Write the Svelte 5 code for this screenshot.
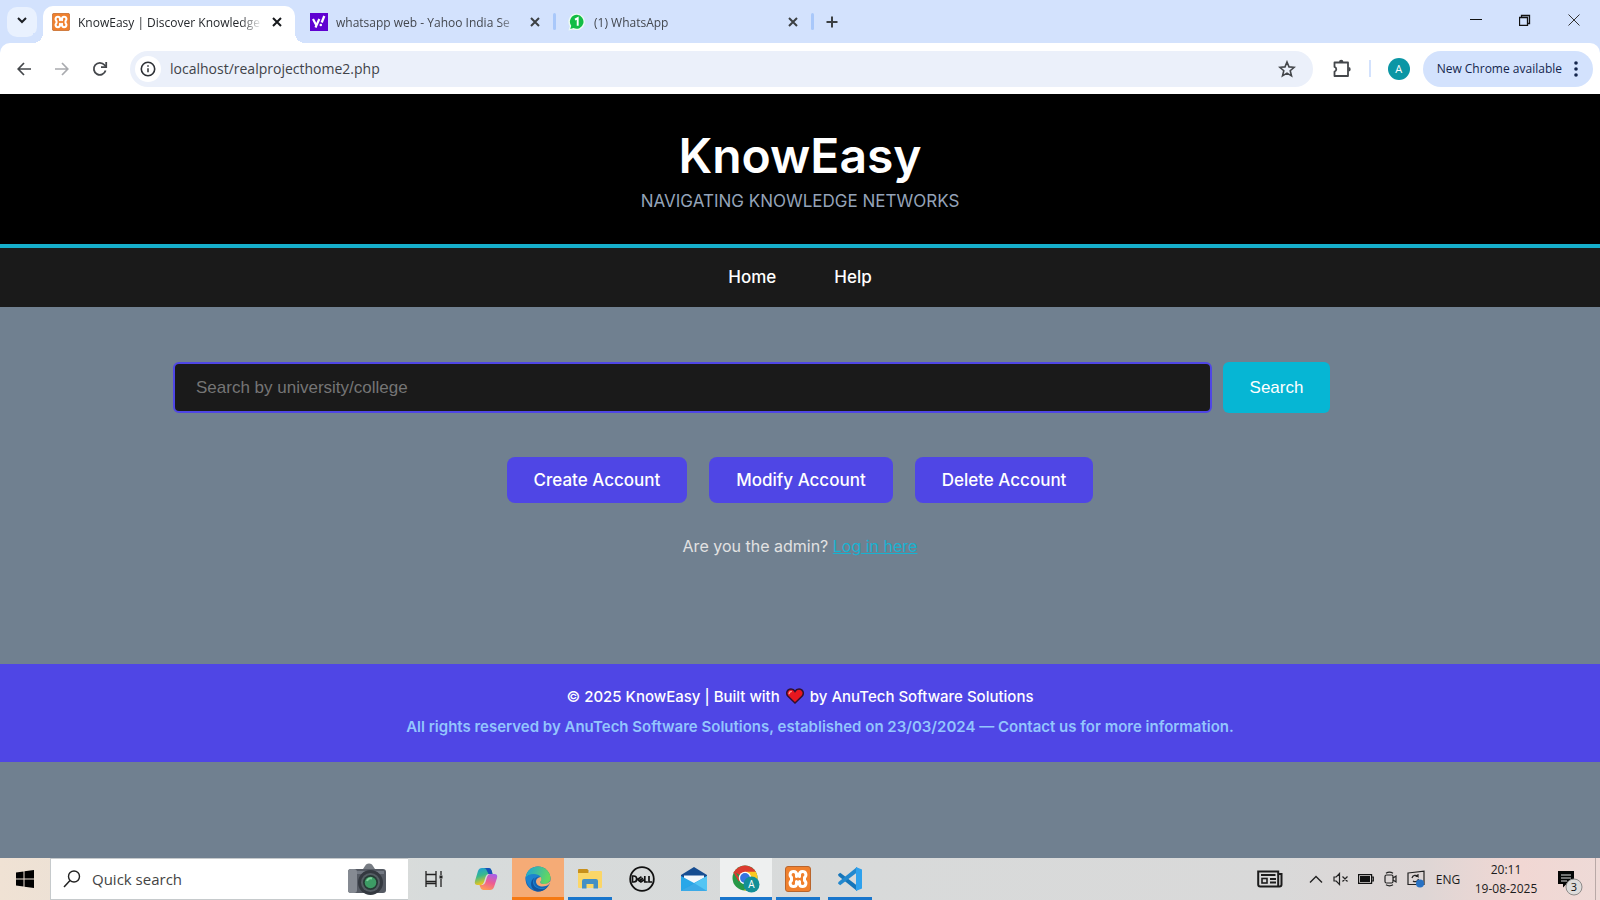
<script>
  const tabs = [
    { id: 'xampp', title: 'KnowEasy | Discover Knowledge', active: true },
    { id: 'yahoo', title: 'whatsapp web - Yahoo India Se', active: false },
    { id: 'whatsapp', title: '(1) WhatsApp', active: false }
  ];
  const apps = [
    { id: 'taskview', label: 'Task View', state: '' },
    { id: 'copilot', label: 'Copilot', state: '' },
    { id: 'edge', label: 'Microsoft Edge', state: 'alert' },
    { id: 'explorer', label: 'File Explorer', state: 'open' },
    { id: 'dell', label: 'Dell', state: '' },
    { id: 'mail', label: 'Mail', state: '' },
    { id: 'chrome', label: 'Google Chrome', state: 'focused' },
    { id: 'xampp', label: 'XAMPP', state: 'open' },
    { id: 'vscode', label: 'Visual Studio Code', state: 'open' }
  ];
  const accountActions = ['Create Account', 'Modify Account', 'Delete Account'];
  let query = $state('');
  let quick = $state('');
  let url = $state('localhost/realprojecthome2.php');
</script>

{#snippet cross()}
  <svg width="10" height="10" viewBox="0 0 10 10"><path d="M1 1l8 8M9 1l-8 8" stroke="currentColor" stroke-width="2" /></svg>
{/snippet}

{#snippet xampp(size)}
  <svg width={size} height={size} viewBox="0 0 26 26">
    <rect x=".5" y=".5" width="25" height="25" rx="2.5" fill="#f0802d" stroke="#b9652c" />
    <path d="M8.500 5.500C5 5.500 4 9.500 6.500 11.500V14.500C4 16.500 5 20.500 8.500 20.500C10.500 20.500 11.500 19.500 11.500 17.500H14.500C14.500 19.500 15.500 20.500 17.500 20.500C21 20.500 22 16.500 19.500 14.500V11.500C22 9.500 21 5.500 17.500 5.500C15.500 5.500 14.500 6.500 14.500 8.500H11.500C11.500 6.500 10.500 5.500 8.500 5.500z" fill="none" stroke="#fff" stroke-width="3" stroke-linejoin="round" />
    <path d="M11.500 8.500v2M14.500 8.500v2M11.500 17.500v-2M14.500 17.500v-2" stroke="#fff" stroke-width="3" stroke-linecap="round" />
  </svg>
{/snippet}

<div class="screen">
  <div class="tabstrip">
    <button class="tab-search" aria-label="Search tabs">
      <svg width="12" height="12" viewBox="0 0 12 12"><path d="M2 4l4 4 4-4" fill="none" stroke="#1c1f24" stroke-width="2" /></svg>
    </button>
    <div class="tabs">
      {#each tabs as tab}
        <div class="tab" class:active={tab.active}>
          {#if tab.id === 'xampp'}
            {@render xampp(18)}
          {:else if tab.id === 'yahoo'}
            <svg width="18" height="18" viewBox="0 0 18 18">
              <rect width="18" height="18" fill="#5f01d1" />
              <path d="M3 6l3.200 6M9.300 6L5.500 14.500" stroke="#fff" stroke-width="2.200" />
              <path d="M14.300 3l-2.600 6.500" stroke="#fff" stroke-width="2.300" />
              <circle cx="10.800" cy="12" r="1.300" fill="#fff" />
            </svg>
          {:else}
            <svg width="18" height="18" viewBox="0 0 18 18">
              <path d="M9 .5a8.300 8.300 0 1 1-3.800 15.900L.5 17.600l1.300-4.300A8.300 8.300 0 0 1 9 .5z" fill="#eefcf2" />
              <path d="M9 1.800a7 7 0 1 1-3.500 13.300l-3.200.8.900-3.100A7 7 0 0 1 9 1.800z" fill="#12bd45" />
              <path d="M7 6.700l2.700-1.500V12.800" fill="none" stroke="#fff" stroke-width="1.900" />
            </svg>
          {/if}
          <span class="tab-title">{tab.title}</span>
          <button class="tab-close" aria-label="Close tab">{@render cross()}</button>
        </div>
      {/each}
      <button class="new-tab" aria-label="New tab">
        <svg width="12" height="12" viewBox="0 0 12 12"><path d="M6 .5v11M.5 6h11" stroke="#3c4043" stroke-width="2" /></svg>
      </button>
    </div>
    <div class="window-controls">
      <button aria-label="Minimize"><svg width="12" height="12" viewBox="0 0 12 12"><path d="M0 5.500h12" stroke="#111" /></svg></button>
      <button aria-label="Restore"><svg width="12" height="12" viewBox="0 0 12 12"><path d="M.5 3.500h8v8h-8zM2.500 3.500v-2h8v8h-2" fill="none" stroke="#111" stroke-width="1.300" /></svg></button>
      <button aria-label="Close"><svg width="12" height="12" viewBox="0 0 12 12"><path d="M.5.500l11 11M11.500.500l-11 11" stroke="#333" /></svg></button>
    </div>
  </div>

  <div class="toolbar-wrap">
    <div class="toolbar">
      <button class="nav-btn" aria-label="Back">
        <svg width="14" height="14" viewBox="0 0 14 14"><path d="M14 7H1.500M7 1L1.200 7 7 13" fill="none" stroke="#44474b" stroke-width="1.700" /></svg>
      </button>
      <button class="nav-btn" aria-label="Forward">
        <svg width="14" height="14" viewBox="0 0 14 14"><path d="M0 7h12.500M7 1l5.800 6L7 13" fill="none" stroke="#a9abaf" stroke-width="1.700" /></svg>
      </button>
      <button class="nav-btn" aria-label="Reload">
        <svg width="16" height="16" viewBox="0 0 16 16"><path d="M13.600 9.500A6 6 0 1 1 12.500 4L14 5.700" fill="none" stroke="#44474b" stroke-width="1.800" /><path d="M14.200 1v5.200H9" fill="none" stroke="#44474b" stroke-width="1.800" /></svg>
      </button>
      <div class="omnibox">
        <button class="site-info" aria-label="View site information">
          <svg width="16" height="16" viewBox="0 0 16 16"><circle cx="8" cy="8" r="6.700" fill="none" stroke="#2d3035" stroke-width="1.600" /><path d="M8 7.200v4M8 4.300v1.500" stroke="#2d3035" stroke-width="1.500" /></svg>
        </button>
        <input class="url" aria-label="Address" bind:value={url} />
        <button class="star" aria-label="Bookmark this tab">
          <svg width="18" height="18" viewBox="0 0 18 18"><path d="M9 2l2 4.900 5.200.4-4 3.400 1.300 5.200L9 13.100l-4.500 2.800 1.300-5.200-4-3.400 5.200-.4z" fill="none" stroke="#44474b" stroke-width="1.600" /></svg>
        </button>
      </div>
      <button class="puzzle" aria-label="Extensions">
        <svg width="20" height="20" viewBox="0 0 20 20"><path d="M2.500 3.500h13.500v13.500H2.500v-4.300a2.500 2.500 0 0 0 0-4.800z" fill="none" stroke="#44474b" stroke-width="1.800" stroke-linejoin="round" /><path d="M7 3a2.200 2.200 0 0 1 4.400 0zM16.500 8a2.200 2.200 0 0 1 0 4.400z" fill="#44474b" /></svg>
      </button>
      <span class="bar-sep"></span>
      <button class="avatar" aria-label="Profile">A</button>
      <button class="update">New Chrome available
        <svg width="4" height="16" viewBox="0 0 4 16"><g fill="#14264d"><circle cx="2" cy="2" r="1.800" /><circle cx="2" cy="8" r="1.800" /><circle cx="2" cy="14" r="1.800" /></g></svg>
      </button>
    </div>
  </div>

  <div class="page">
    <header>
      <h1>KnowEasy</h1>
      <p>NAVIGATING KNOWLEDGE NETWORKS</p>
    </header>
    <nav><a href="#home">Home</a><a href="#help">Help</a></nav>
    <main>
      <form class="search" onsubmit={(e) => e.preventDefault()}>
        <input aria-label="Search by university/college" placeholder="Search by university/college" bind:value={query} />
        <button>Search</button>
      </form>
      <div class="actions">
        {#each accountActions as action}<a href="#account">{action}</a>{/each}
      </div>
      <p class="admin">Are you the admin? <a href="#login">Log in here</a></p>
    </main>
    <footer>
      <p>© 2025 KnowEasy | Built with
        <svg class="heart" width="18" height="16" viewBox="0 0 18 16" role="img" aria-label="love"><path d="M9 15L2 8.300C-.8 5 1.500 1 5 1c2 0 3.300 1 4 2.300C9.700 2 11 1 13 1c3.500 0 5.800 4 3 7.300z" fill="#e8171f" stroke="#32102f" stroke-width="1.500" /><path d="M3.200 5.500c.2-1.300 1-2 2-2" fill="none" stroke="#ff9a8b" stroke-width="1.600" stroke-linecap="round" /></svg>
        by AnuTech Software Solutions</p>
      <p class="rights">All rights reserved by AnuTech Software Solutions, established on 23/03/2024 — Contact us for more information.</p>
    </footer>
  </div>

  <div class="taskbar">
    <button class="start" aria-label="Start">
      <svg width="18" height="18" viewBox="0 0 18 18"><path d="M0 2.500l7.500-1v7H0zM8.500 1.300L18 0v8.500H8.500zM0 9.500h7.500v7l-7.500-1zM8.500 9.500H18V18l-9.500-1.300z" fill="#000" /></svg>
    </button>
    <label class="quick">
      <svg width="18" height="18" viewBox="0 0 18 18"><circle cx="11" cy="6.500" r="5.500" fill="none" stroke="#222" stroke-width="1.400" /><path d="M7 10.500L1 17" stroke="#222" stroke-width="1.500" /></svg>
      <input aria-label="Quick search" placeholder="Quick search" bind:value={quick} />
      <svg width="38" height="32" viewBox="0 0 38 32">
        <path d="M15 6l3-4.500q3-2 6 0L27 6z" fill="#777c83" />
        <rect x="0" y="6" width="38" height="24" rx="3" fill="#555a63" />
        <rect x="0" y="6" width="9" height="24" rx="3" fill="#858a92" />
        <rect x="9" y="8" width="27" height="3" fill="#737983" />
        <circle cx="22.500" cy="19.500" r="12.500" fill="#343940" />
        <circle cx="22.500" cy="19.500" r="9.500" fill="#555d64" />
        <circle cx="22.500" cy="19.500" r="7.500" fill="#263b35" />
        <circle cx="22.500" cy="19.500" r="5.800" fill="#3d9c65" />
        <path d="M19 18a4 4 0 0 1 5-2.500" fill="none" stroke="#7ed09b" stroke-width="2" />
      </svg>
    </label>
    <div class="apps">
      {#each apps as app}
        <button class="app {app.state}" aria-label={app.label}>
          {#if app.id === 'taskview'}
            <svg width="18" height="18" viewBox="0 0 18 18"><path d="M1 1v3.500h10V1M1 17v-3.500h10V17M1 5.500v6h10v-6M1 4.500v9M11 4.500v9M16 1v4M16 9v8" fill="none" stroke="#222" stroke-width="1.300" /><path d="M14.500 5.500h3v3h-3z" fill="#222" /></svg>
          {:else if app.id === 'copilot'}
            <svg width="24" height="24" viewBox="0 0 24 24">
              <defs>
                <linearGradient id="cpa" x2=".3" y2="1"><stop stop-color="#1c9ae0" /><stop offset=".5" stop-color="#38b98c" /><stop offset="1" stop-color="#f5c518" /></linearGradient>
                <linearGradient id="cpb" x1=".7" x2=".3" y2="1"><stop stop-color="#a760e8" /><stop offset=".5" stop-color="#ee5d91" /><stop offset="1" stop-color="#ff9c55" /></linearGradient>
              </defs>
              <path d="M8 1h7q2 0 2.800 3l.7 3h-4q-2 0-3 3l-1.500 5q-1 3-3 3H3.500Q0 18 1 14L4 4q1-3 4-3z" fill="url(#cpa)" />
              <path d="M10 1h5q2 0 2.800 3l.7 3h-4L13 4q-.8-3-3-3z" fill="#1750b8" />
              <path d="M16 23H9q-2 0-2.800-3l-.7-2h3q2 0 3-3L13 10q1-3 3-3h4.500q3.500 0 2.500 4l-3 9q-1 3-4 3z" fill="url(#cpb)" />
            </svg>
          {:else if app.id === 'edge'}
            <svg width="26" height="26" viewBox="0 0 26 26">
              <defs><linearGradient id="ed" x2="1" y2=".3"><stop stop-color="#1ba2dd" /><stop offset="1" stop-color="#62d761" /></linearGradient></defs>
              <circle cx="13" cy="13" r="12.500" fill="#1565b5" />
              <path d="M.6 12C1.500 4 7 .5 13 .5 21 .5 25.500 7 25.500 12c0 4-3 6-6.500 6-3 0-4.500-1.200-3.500-2.500 2-3 0-6-4-6.500C7 8 2 9 .6 12z" fill="url(#ed)" />
              <path d="M.6 12C3 7 13 7 15.800 11c-4-1-7.300 1.500-6.800 5 .5 5 6 7.500 12 5.500C17 27 3 27 .6 12z" fill="#1d83cf" />
              <path d="M10 11.500c-4 4-2 11 6 11.500 3 0 5-.5 7-3-2.500 4-7 6-11 5.500C5 24 4 14 10 11.500z" fill="#15549d" />
              <path d="M15.800 11c1 2 .5 3.500-.3 4.500-1 1.300.5 2.500 3.500 2.500 2.500 0 5-1 6.800-3.500-.5 3-2 4.500-4.800 5.500-5 1.500-10-.5-10-4.500 0-2.500 2-4.300 4.800-4.500z" fill="#f5ab76" />
            </svg>
          {:else if app.id === 'explorer'}
            <svg width="24" height="22" viewBox="0 0 24 22">
              <path d="M0 3V2q0-1 1-1h8q1 0 1.500 1.500V5H0z" fill="#c8901b" />
              <path d="M0 5h11l1.500-2H23q1 0 1 1v15q0 1-1 1H1q-1 0-1-1z" fill="#fbd667" />
              <path d="M4 20.500V13q0-2 2-2h12q2 0 2 2v7.500h-4.500V16h-7v4.500z" fill="#438fc4" />
            </svg>
          {:else if app.id === 'dell'}
            <svg width="26" height="26" viewBox="0 0 26 26"><circle cx="13" cy="13" r="11.800" fill="none" stroke="#111" stroke-width="1.800" /><path d="M3.500 10v6h1.200a3 3 0 0 0 0-6zM12.500 10.800L8.700 13.300l1.600 1.500 3.800-2.500M10.300 14.800l1.600 1.200 3.600-2.400M15.800 10v6h3M20 10v6h3" fill="none" stroke="#111" stroke-width="1.700" /></svg>
          {:else if app.id === 'mail'}
            <svg width="26" height="26" viewBox="0 0 26 26"><path d="M0 9L13 1l13 8v6H0z" fill="#164d91" /><path d="M3 9.500h20V18H3z" fill="#f4f7fb" /><path d="M0 10l13 7 13-7v15H0z" fill="#29a7e8" /><path d="M26 10L0 25h26z" fill="#53c5f3" /><path d="M13 17L26 25H0z" fill="#248fdb" opacity=".5" /></svg>
          {:else if app.id === 'chrome'}
            <svg width="28" height="28" viewBox="0 0 28 28">
              <circle cx="13" cy="13" r="12.500" fill="#279847" />
              <path d="M13 13L2.200 6.800A12.500 12.500 0 0 1 23.800 6.800z" fill="#dc3b30" />
              <path d="M13 6.800h10.800A12.500 12.500 0 0 1 12 25.500L18.400 16z" fill="#fbc920" />
              <path d="M2.200 6.800L7.600 16" stroke="#dc3b30" stroke-width="2" />
              <circle cx="13" cy="13" r="6.200" fill="#fff" /><circle cx="13" cy="13" r="4.900" fill="#3574df" />
              <circle cx="19.500" cy="19.500" r="8" fill="#128f97" />
              <text x="19.500" y="23" text-anchor="middle" font-size="10" fill="#fff">A</text>
            </svg>
          {:else if app.id === 'xampp'}
            {@render xampp(26)}
          {:else}
            <svg width="26" height="26" viewBox="0 0 26 26"><path d="M1 8.500L3.200 6.800 20 19.500V25L1.500 10z" fill="#1475ba" /><path d="M1 17.500L3.200 19.200 20 6.500V1L1.500 16z" fill="#2288ce" /><path d="M19 1l6 2.500v19L19 25z" fill="#2ea1ed" /></svg>
          {/if}
        </button>
      {/each}
    </div>
    <div class="tray">
      <button class="news" aria-label="News"><svg width="26" height="18" viewBox="0 0 26 18"><path d="M1.200 1.500h20v15h-18q-2 0-2-2zM21.200 4h3.300v10.500q0 2-2 2h-3" fill="none" stroke="#1c1c1c" stroke-width="2" /><path d="M4 5h14.500M13 9h6M13 12.500h6" stroke="#1c1c1c" stroke-width="1.800" /><rect x="5" y="8.500" width="5" height="4.500" fill="none" stroke="#1c1c1c" stroke-width="1.600" /></svg></button>
      <button aria-label="Show hidden icons"><svg width="14" height="8" viewBox="0 0 14 8"><path d="M1 7.500l6-6 6 6" fill="none" stroke="#222" stroke-width="1.400" /></svg></button>
      <button aria-label="Volume muted"><svg width="16" height="14" viewBox="0 0 16 14"><path d="M1 5h2.200l3.300-3.500v11L3.200 9H1zM9.500 4.500l5 5M14.500 4.500l-5 5" fill="none" stroke="#222" stroke-width="1.200" /></svg></button>
      <button aria-label="Battery"><svg width="16" height="10" viewBox="0 0 16 10"><path d="M.6.600h13v8.800H.6zM13.600 3h1.700v4h-1.700" fill="none" stroke="#111" stroke-width="1.200" /><path d="M2 2h10v6H2z" fill="#111" /></svg></button>
      <button aria-label="Meet now"><svg width="14" height="16" viewBox="0 0 14 16"><rect x="1" y="4" width="8" height="8" rx="1.500" fill="none" stroke="#222" stroke-width="1.200" /><path d="M9 7l3-2v6L9 9M2 2.200q3.500-2 7 0M2 13.800q3.500 2 7 0" fill="none" stroke="#222" stroke-width="1.200" /></svg></button>
      <button aria-label="Updates"><svg width="18" height="18" viewBox="0 0 18 18"><path d="M1 3l16-1.800V14.500H1z" fill="none" stroke="#222" stroke-width="1.200" /><path d="M5 8a3.500 3.500 0 0 1 6-1.500V4M11 6.500H8.500M11.500 9a3.500 3.500 0 0 1-5.500 2" fill="none" stroke="#222" stroke-width="1.200" /><circle cx="13" cy="13.500" r="4" fill="#2872c4" /></svg></button>
      <button class="lang">ENG</button>
      <button class="clock"><span>20:11</span><span>19-08-2025</span></button>
      <button class="notify" aria-label="3 notifications">
        <svg width="26" height="26" viewBox="0 0 26 26"><path d="M1 1h16v13H9.500L6 17.500V14H1z" fill="#050505" /><path d="M4 5h10M4 8h10M4 11h6" stroke="#ddd" stroke-width="1.200" /><circle cx="17" cy="17" r="8" fill="#dedcdb" stroke="#8d8a89" /><text x="17" y="21" text-anchor="middle" font-size="11" fill="#111">3</text></svg>
      </button>
      <span class="peek"></span>
    </div>
  </div>
</div>

<style>
  :global(body) { margin: 0; background: #708090; }
  button { border: 0; padding: 0; background: none; font: inherit; color: inherit; }
  input { min-width: 0; border: 0; outline: 0; background: none; font: inherit; color: inherit; }
  svg { flex: none; }
  .screen { display: flex; flex-direction: column; min-height: 100vh; font-family: "Open Sans", "Noto Sans", sans-serif; }

  .tabstrip { display: flex; height: 43px; background: #d3e2fd; color: #43474e; font-size: 12px; }
  .tab-search { align-self: center; width: 30px; height: 30px; margin: 0 6px 0 7px; border-radius: 10px; background: #e9f1fe; }
  .tabs { display: flex; flex: 1; padding-top: 6px; }
  .tab { position: relative; display: flex; align-items: center; gap: 8px; box-sizing: border-box; width: 258px; height: 32px; padding: 0 11px 0 12px; }
  .tab.active { width: 252px; height: 37px; margin-right: 3px; padding: 0 11px 5px 9px; border-radius: 10px 10px 0 0; background: #fff; color: #25282c; }
  .tab.active::before, .tab.active::after { content: ''; position: absolute; bottom: 0; width: 10px; height: 10px; }
  .tab.active::before { right: 100%; background: radial-gradient(circle at 0 0, #d3e2fd 10px, #fff 10px); }
  .tab.active::after { left: 100%; background: radial-gradient(circle at 100% 0, #d3e2fd 10px, #fff 10px); }
  .tab:not(.active) { border-right: 3px solid transparent; }
  .tab:not(.active)::after { content: ''; position: absolute; right: -3px; top: 7px; width: 3px; height: 17px; border-radius: 2px; background: #a9c8fa; }
  .tab-title { flex: 1; overflow: hidden; white-space: nowrap; mask-image: linear-gradient(90deg, #000 calc(100% - 22px), transparent); }
  .tab-close { display: flex; padding: 2px; color: #3c4043; }
  .active .tab-close { color: #17191c; }
  .new-tab { display: flex; align-items: center; height: 32px; padding: 0 12px; }
  .window-controls { display: flex; margin-right: 2px; }
  .window-controls button { width: 49px; }

  .toolbar-wrap { background: #d3e2fd; }
  .toolbar { display: flex; align-items: center; height: 51px; box-sizing: border-box; padding: 0 7px 0 5px; border-radius: 10px 10px 0 0; background: #fff; }
  .nav-btn { display: flex; justify-content: center; width: 38px; }
  .omnibox { display: flex; flex: 1; align-items: center; height: 36px; margin-left: 11px; border-radius: 18px; background: #ebf0fa; }
  .site-info { display: grid; place-items: center; width: 26px; height: 26px; margin: 0 9px 0 5px; border-radius: 50%; background: #fff; }
  .url { flex: 1; padding: 0; color: #3f4349; font-size: 14px; }
  .star { display: flex; margin-right: 17px; }
  .puzzle { display: flex; margin: 0 17px 0 19px; }
  .bar-sep { width: 2px; height: 17px; background: #d3e2fd; }
  .avatar { width: 22px; height: 22px; margin: 0 13px 0 17px; border-radius: 50%; background: #0b96a5; color: #fff; font-size: 11px; line-height: 22px; }
  .update { display: flex; align-items: center; gap: 12px; height: 36px; padding: 0 15px 0 14px; border-radius: 18px; background: #d3e2fd; color: #14264d; font-size: 12px; white-space: nowrap; }

  .page { flex: 1; background: #708090; color: #fff; font-family: Inter, sans-serif; text-align: center; }
  h1, p { margin: 0; }
  header { box-sizing: border-box; height: 154px; padding-top: 32px; border-bottom: 4px solid #16aecb; background: #000; }
  h1 { font-size: 48px; font-weight: 600; line-height: 60px; }
  header p { color: #94a3b8; font-size: 17px; line-height: 30px; }
  nav { display: flex; justify-content: center; gap: 58px; background: #1a1a1a; font-size: 17px; font-weight: 500; line-height: 59px; }
  nav a, .actions a { color: #fff; text-decoration: none; }
  main { max-width: 1254px; margin: 0 auto; padding: 55px 24px 103px; }
  .search { display: flex; gap: 11px; margin: 0 97px 44px 0; font-family: "Liberation Sans", Arial, sans-serif; font-size: 17px; line-height: 20px; }
  .search input { box-sizing: border-box; flex: 1; height: 51px; padding: 0 21px; border: 2px solid #4f46e5; border-radius: 6px; background: #1a1a1a; }
  .search input::placeholder { color: #757575; }
  .search button { width: 107px; border-radius: 6px; background: #06b6d4; }
  .actions { display: flex; justify-content: center; gap: 22px; font-size: 17px; font-weight: 500; }
  .actions a { padding: 0 27px; border-radius: 8px; background: #4f46e5; line-height: 46px; }
  .admin { margin-top: 28px; color: #e2e2e2; font-size: 16px; line-height: 30px; }
  .admin a { color: #18b2d0; }
  footer { padding: 18px 0 20px; background: #4f46e5; font-size: 15px; font-weight: 500; line-height: 30px; }
  .heart { margin: 0 2px; vertical-align: -2px; }
  .rights { padding-left: 40px; color: #93c5fd; font-weight: 600; }

  .taskbar { display: flex; height: 42px; background: linear-gradient(90deg, #f0e2d4 0, #d7dbdb 27%, #d9d9d9 80%, #ded6d5 89%, #f1d7d3 95%, #eedad7); color: #1b1b1b; }
  .start { display: flex; align-items: center; justify-content: center; width: 50px; }
  .quick { display: flex; align-items: center; box-sizing: border-box; width: 358px; padding: 0 22px 0 12px; border: 1px solid #c6cacc; border-width: 1px 0 1px 1px; background: #fff; }
  .quick input { flex: 1; padding: 0 0 0 11px; font-size: 15px; }
  .quick input::placeholder { color: #444; opacity: 1; }
  .apps { display: flex; flex: 1; }
  .app { display: flex; align-items: center; justify-content: center; box-sizing: border-box; width: 52px; }
  .alert { background: #f5ab76; box-shadow: inset 0 -3px #f57913; }
  .open { width: 44px; margin: 0 4px; box-shadow: inset 0 -3px #1976cc; }
  .focused { background: #eef0f0; box-shadow: inset 0 -3px #1976cc; }
  .tray { display: flex; align-items: center; font-size: 12px; }
  .tray button { display: flex; align-items: center; justify-content: center; width: 25px; }
  .tray .news { margin-right: 9px; width: 48px; }
  .tray .lang { width: 40px; }
  .tray .clock { flex-direction: column; width: 76px; line-height: 19px; }
  .tray .notify { width: 51px; padding-top: 8px; }
  .peek { align-self: stretch; width: 4px; border-left: 1px solid #b9a9a7; }
</style>
